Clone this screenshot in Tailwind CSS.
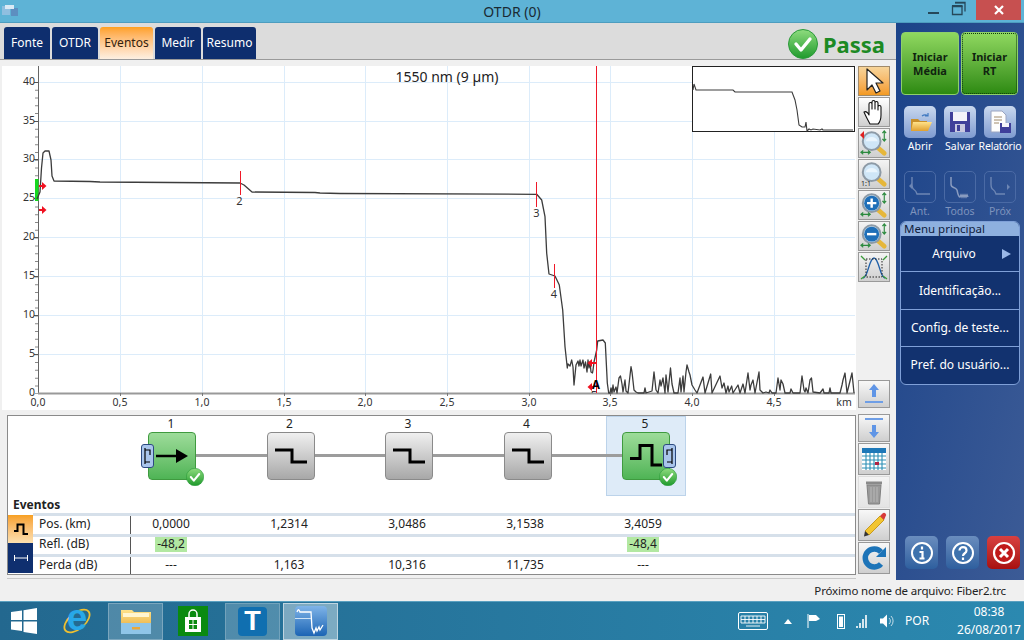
<!DOCTYPE html>
<html>
  <head>
    <title>OTDR (0)</title>
    <script src="https://cdn.jsdelivr.net/npm/@tailwindcss/browser@4"></script>
  </head>
  <body class="w-[1024px] h-[640px] overflow-hidden bg-[#f0f0f0] font-['Noto_Sans',sans-serif] text-[12px] text-[#222]">
    <!-- shared icon parts -->
    <svg class="absolute w-0 h-0">
      <defs>
        <linearGradient id="gcheck" x1="0" y1="0" x2="0" y2="1"><stop offset="0" stop-color="#8fdc7f"/><stop offset="1" stop-color="#1f9a2c"/></linearGradient>
        <linearGradient id="gfold" x1="0" y1="0" x2="0" y2="1"><stop offset="0" stop-color="#ffe28a"/><stop offset="1" stop-color="#e0a030"/></linearGradient>
        <linearGradient id="gapp" x1="0" y1="0" x2="0" y2="1"><stop offset="0" stop-color="#7fb4e8"/><stop offset="1" stop-color="#1c64b4"/></linearGradient>
        <clipPath id="c5"><rect x="585" y="380" width="20" height="13"/></clipPath>
        <symbol id="check" viewBox="0 0 30 30">
          <circle cx="15" cy="15" r="14.5" fill="url(#gcheck)" stroke="#2a9a3a"/>
          <path d="M8 15l5 6 9-11" fill="none" stroke="#fff" stroke-width="3.4" stroke-linecap="round" stroke-linejoin="round"/>
        </symbol>
        <symbol id="mag" viewBox="0 0 32 30">
          <path d="M19 19l8 7" stroke="#e6b73a" stroke-width="5" stroke-linecap="round"/>
          <circle cx="13.5" cy="13" r="9.5" fill="#cfe6f7" stroke="#8d9aa6" stroke-width="2.2"/>
          <path d="M7 13a7 7 0 0 1 13 0z" fill="#eaf5fd"/>
        </symbol>
        <symbol id="arrowsxy" viewBox="0 0 32 30">
          <path d="M27 2v11M25 4.500l2-2.500 2 2.500M25 10.500l2 2.500 2-2.500M2 25h10M4.500 23l-2.500 2 2.500 2M9.500 23l2.500 2-2.500 2" fill="none" stroke="#2b8a3e" stroke-width="1.200"/>
        </symbol>
        <symbol id="nodestep" viewBox="0 0 46 46">
          <path d="M7 17h17v12h15" fill="none" stroke="#000" stroke-width="3"/>
        </symbol>
      </defs>
    </svg>

    <div class="flex flex-col w-[1024px] h-[640px]">
      <!-- title bar -->
      <div class="flex items-center h-[23px] bg-[#5eb3d6] border-b border-[#4d9dbf] relative">
        <svg class="ml-[2px] w-[17px] h-[12px]" viewBox="0 0 17 12"><rect x="0" y="1" width="8" height="9" fill="#8fbfe0"/><rect x="9" y="3" width="7" height="8" fill="#5d8fc0"/><rect x="3" y="0" width="9" height="4" fill="#dbeaf5"/></svg>
        <div class="flex-1 text-center text-[14px] text-[#1a2a33] ml-[-19px]">OTDR (0)</div>
        <div class="absolute right-[3px] top-0 flex items-start">
          <svg class="w-[24px] h-[20px]" viewBox="0 0 24 20"><rect x="4" y="12" width="11" height="2" fill="#26485a"/></svg>
          <svg class="w-[24px] h-[20px] mr-[4px]" viewBox="0 0 24 20"><path d="M7 2.500h10v9M4.500 6.500h9.500v8h-9.500z" fill="none" stroke="#26485a" stroke-width="1.300"/><rect x="4" y="5" width="10.500" height="2" fill="#26485a"/><rect x="7" y="2" width="10" height="1.500" fill="#26485a"/></svg>
          <div class="flex items-center justify-center w-[45px] h-[20px] bg-[#c75050]">
            <svg class="w-[10px] h-[10px]" viewBox="0 0 10 10"><path d="M1 1l8 8M9 1l-8 8" stroke="#fff" stroke-width="2.200"/></svg>
          </div>
        </div>
      </div>

      <div class="flex h-[557px]">
        <!-- left column -->
        <div class="flex flex-col w-[896px]">
          <!-- tabs -->
          <div class="flex items-end justify-between h-[37px] pl-[4px] pr-[11px] bg-[#dcdcdc] border-b border-[#9a9a9a]">
            <div class="flex gap-[2px] h-[32px]">
              <div class="flex items-center justify-center w-[46px] rounded-t-[3px] bg-[#0e2e6e] text-white">Fonte</div>
              <div class="flex items-center justify-center w-[46px] rounded-t-[3px] bg-[#0e2e6e] text-white">OTDR</div>
              <div class="flex items-center justify-center w-[53px] rounded-t-[3px] bg-linear-to-b from-[#ffa01a] to-[#fdf0e2] text-[#33220f]">Eventos</div>
              <div class="flex items-center justify-center w-[46px] rounded-t-[3px] bg-[#0e2e6e] text-white">Medir</div>
              <div class="flex items-center justify-center w-[53px] rounded-t-[3px] bg-[#0e2e6e] text-white">Resumo</div>
            </div>
            <div class="flex items-center gap-[5px] self-center mt-[5px]">
              <svg class="w-[30px] h-[30px]"><use href="#check"/></svg>
              <span class="text-[22px] font-bold leading-none text-[#1c8a24]">Passa</span>
            </div>
          </div>

          <div class="flex h-[520px]">
            <div class="flex flex-col w-[856px]">
              <!-- trace chart -->
              <svg class="block w-[856px] h-[350px]" viewBox="0 60 856 350" font-size="10.500" fill="#333">
                <rect x="2" y="66" width="854" height="344" fill="#fff"/>
                <g stroke="#dcecfa" stroke-width="1">
                  <path d="M120.500 66V393M202.500 66V393M284.500 66V393M365.500 66V393M447.500 66V393M529.500 66V393M610.500 66V393M692.500 66V393M774.500 66V393"/>
                  <path d="M38 82.500H855M38 121.500H855M38 159.500H855M38 198.500H855M38 237.500H855M38 276.500H855M38 315.500H855M38 354.500H855"/>
                </g>
                <!-- axes -->
                <path d="M38.500 66V394" stroke="#666" stroke-width="1"/>
                <path d="M35 82v312" stroke="#888" stroke-width="3" stroke-dasharray="1 6.780" fill="none" transform="translate(1.500 0)"/>
                <path d="M34 82.500h4M34 121.500h4M34 159.500h4M34 198.500h4M34 237.500h4M34 276.500h4M34 315.500h4M34 354.500h4" stroke="#555"/>
                <path d="M38 393.500H855" stroke="#999" stroke-width="2"/>
                <path d="M120.500 393v3M202.500 393v3M284.500 393v3M365.500 393v3M447.500 393v3M529.500 393v3M610.500 393v3M692.500 393v3M774.500 393v3" stroke="#777"/>
                <g text-anchor="end">
                  <text x="35" y="85">40</text><text x="35" y="124">35</text><text x="35" y="162">30</text><text x="35" y="201">25</text><text x="35" y="240">20</text><text x="35" y="279">15</text><text x="35" y="318">10</text><text x="35" y="357">5</text><text x="35" y="396">0</text>
                </g>
                <g text-anchor="middle">
                  <text x="38" y="406">0,0</text><text x="120" y="406">0,5</text><text x="202" y="406">1,0</text><text x="284" y="406">1,5</text><text x="365" y="406">2,0</text><text x="447" y="406">2,5</text><text x="529" y="406">3,0</text><text x="610" y="406">3,5</text><text x="692" y="406">4,0</text><text x="774" y="406">4,5</text><text x="844" y="406">km</text>
                </g>
                <text x="447" y="82" text-anchor="middle" font-size="14" fill="#222">1550 nm (9 µm)</text>
                <!-- launch marker -->
                <rect x="35" y="179" width="3.500" height="22" fill="#17d81f"/>
                <!-- trace -->
                <path fill="none" stroke="#3c3c3c" stroke-width="1.300" stroke-linejoin="round"
                  d="M37 199 40 192 41.500 168 43 153 45 151 49 151 51 160 52 176 54 181 90 181.500 100 182 170 182.500 240 183 244 185 252 192 315 192.500 320 193 340 193.500 536.700 194.300 541.700 200 545 216.700 546.700 253.300 549 274 555 276 559.300 285 562.700 310 565 346.700 567.300 368 568 364 570 366 571.700 360 573 367 574 385 576 365 578 361 579 366 580 360 581 366 583 360 584 368 585.500 362 587 372 588 360 589 368 590 362 591 372 592.500 373 593 370 594 362 596.700 350 597.700 341 603 340 605.300 343 607.300 383 608.700 393 610 393 611 388 612 393 613 385 614 392 616 387 617 393 619 378 620.500 376 622 384 623 392 625 380 626 391 628 393 631 366.700 632 372 634 390 636 392 638 393 644 393 645 388 646 393 652 391 654 372 656 390 658 393 660 380 661 386 663 378 665 393 666 375 668 392 670.500 368 672 384 674 393 678 393 680 378 681 392 683 376 684 392 686 372 687 365 689 372 690 375 692 385 695 390 697 393 703 377 705 393 710.700 374 712 393 720 376 722 388 724 383 726 393 728 386 729 392 731.700 386 733 393 738 385 740 393 743 384 745 393 748 373 750 390 751 385 753 380 755 393 759 372 760 390 763 393 766 392 769 393 770 390 772 393 776 393 778 378 780 390 781 380 783 384 785 393 790 393 791 389 793 393 800 393 802 376 804 390 805 392 806 388 808 393 810 380 811.500 378 813 392 820 393 823 389 824 393 829 393 830 388 831 393 840 393 842 385 843 380 845 373 847 393 850 381 852 373 854 393"/>
                <!-- event ticks -->
                <path d="M240.500 171V195M536.500 182V207M554.500 264V288" stroke="#f01828" stroke-width="1"/>
                <text x="239.500" y="205" text-anchor="middle" font-size="11">2</text>
                <text x="536.500" y="217" text-anchor="middle" font-size="11">3</text>
                <text x="554" y="298" text-anchor="middle" font-size="11">4</text>
                <path d="M596.500 66V393" stroke="#f01828" stroke-width="1"/>
                <path d="M39 185h3v-3l4.500 4-4.500 4v-3h-3zM39 209h3v-3l4.500 4-4.500 4v-3h-3z" fill="#f01020"/>
                <path d="M596 362h-4v-3l-4.500 4 4.500 4v-3h4zM593 386h-1v-3l-4.500 4 4.500 4v-3h1z" fill="#f01020"/>
                <text x="596" y="389" text-anchor="middle" font-size="11.500" font-weight="700" fill="#000">A</text>
                <text x="594" y="399" text-anchor="middle" font-size="11" clip-path="url(#c5)">5</text>
                <!-- overview -->
                <rect x="692.500" y="66.500" width="162" height="65" fill="#fff" stroke="#222"/>
                <path fill="none" stroke="#3c3c3c" stroke-width="1.100" d="M693 90 694 84 696 90 733 90 735 92 792 92 795 100 797 110 799 125 802 127 805 127 806 122 807 131 809 129 811 130 813 129 820 130 822 129 823 130 835 130 853 130"/>
              </svg>

              <!-- events panel -->
              <div class="flex flex-col relative ml-[7px] mt-[5px] w-[849px] h-[160px] bg-white border border-[#8a8a8a]">
                <!-- selected node highlight -->
                <div class="absolute left-[598px] top-0 w-[80px] h-[80px] bg-[#deebf8] border border-[#bcd3ea]"></div>
                <div class="relative flex items-start h-[81px] pl-[140px]">
                  <div class="flex flex-col w-[48px] relative">
                    <div class="h-[16px] pr-[2px] text-center leading-[16px]">1</div>
                    <div class="flex items-center justify-center h-[48px] rounded-[4px] border border-[#3f9a3f] bg-linear-to-b from-[#9ddc9a] to-[#4eb455]">
                      <svg class="w-[46px] h-[46px]" viewBox="0 0 46 46"><path d="M7 23h24" stroke="#000" stroke-width="2.500"/><path d="M27 16l12 7-12 7z" fill="#000"/></svg>
                    </div>
                    <div class="absolute left-[-7px] top-[28px] w-[13px] h-[24px] rounded-[3px] bg-[#a9c5ec] border border-[#2c4a80]">
                      <svg class="w-[11px] h-[22px]" viewBox="0 0 11 22"><path d="M3 5h5v5M8 17H3v-5M3 3v16" fill="none" stroke="#000" stroke-width="1.200"/></svg>
                    </div>
                    <svg class="absolute left-[38px] top-[52px] w-[18px] h-[18px]"><use href="#check"/></svg>
                  </div>
                  <div class="w-[70.500px] h-[3px] mt-[38px] bg-[#9c9c9c]"></div>
                  <div class="flex flex-col w-[48px]">
                    <div class="h-[16px] pr-[2px] text-center leading-[16px]">2</div>
                    <div class="h-[48px] rounded-[4px] border border-[#8a8a8a] bg-linear-to-b from-[#f0f0f0] to-[#a8a8a8]"><svg class="w-[46px] h-[46px]"><use href="#nodestep"/></svg></div>
                  </div>
                  <div class="w-[70.500px] h-[3px] mt-[38px] bg-[#9c9c9c]"></div>
                  <div class="flex flex-col w-[48px]">
                    <div class="h-[16px] pr-[2px] text-center leading-[16px]">3</div>
                    <div class="h-[48px] rounded-[4px] border border-[#8a8a8a] bg-linear-to-b from-[#f0f0f0] to-[#a8a8a8]"><svg class="w-[46px] h-[46px]"><use href="#nodestep"/></svg></div>
                  </div>
                  <div class="w-[70.500px] h-[3px] mt-[38px] bg-[#9c9c9c]"></div>
                  <div class="flex flex-col w-[48px]">
                    <div class="h-[16px] pr-[2px] text-center leading-[16px]">4</div>
                    <div class="h-[48px] rounded-[4px] border border-[#8a8a8a] bg-linear-to-b from-[#f0f0f0] to-[#a8a8a8]"><svg class="w-[46px] h-[46px]"><use href="#nodestep"/></svg></div>
                  </div>
                  <div class="w-[70.500px] h-[3px] mt-[38px] bg-[#9c9c9c]"></div>
                  <div class="flex flex-col w-[48px] relative">
                    <div class="h-[16px] pr-[2px] text-center leading-[16px]">5</div>
                    <div class="h-[48px] rounded-[4px] border border-[#3f9a3f] bg-linear-to-b from-[#9ddc9a] to-[#4eb455]">
                      <svg class="w-[46px] h-[46px]" viewBox="0 0 46 46"><path d="M7 25.500h10V12.500h12v19.500h10" fill="none" stroke="#000" stroke-width="3"/></svg>
                    </div>
                    <div class="absolute left-[41px] top-[28px] w-[13px] h-[24px] rounded-[3px] bg-[#a9c5ec] border border-[#2c4a80]">
                      <svg class="w-[11px] h-[22px]" viewBox="0 0 11 22"><path d="M8 5H3v5M3 17h5v-5M8 3v16" fill="none" stroke="#000" stroke-width="1.200"/></svg>
                    </div>
                    <svg class="absolute left-[37px] top-[52px] w-[18px] h-[18px]"><use href="#check"/></svg>
                  </div>
                </div>
                <div class="h-[16px] pl-[5px] font-bold leading-[16px] text-[#222]">Eventos</div>
                <!-- table -->
                <div class="flex h-[61px]">
                  <div class="flex flex-col w-[25px] shrink-0 pt-[2px]">
                    <div class="flex items-center justify-center h-[28px] bg-linear-to-b from-[#f7a01e] to-[#fbe0b0]">
                      <svg class="w-[16px] h-[14px]" viewBox="0 0 16 14"><path d="M1 9h3.500V2.500h6V12H15" fill="none" stroke="#000" stroke-width="2"/></svg>
                    </div>
                    <div class="flex items-center justify-center h-[30px] bg-[#0f2f6f]">
                      <svg class="w-[16px] h-[10px]" viewBox="0 0 16 10"><path d="M1 5h14M1.500 2v6M14.500 2v6" stroke="#fff" stroke-width="1"/></svg>
                    </div>
                  </div>
                  <div class="flex flex-col flex-1">
                    <div class="flex items-start h-[21px] border-t-[3px] border-[#d6e0ea] leading-[16px]">
                      <div class="w-[98px] pl-[6px] h-full border-r border-[#555]">Pos. (km)</div>
                      <div class="w-[80px] mr-[19px] text-center">0,0000</div>
                      <div class="w-[118px] text-center">1,2314</div>
                      <div class="w-[118px] text-center">3,0486</div>
                      <div class="w-[118px] text-center">3,1538</div>
                      <div class="w-[118px] text-center">3,4059</div>
                    </div>
                    <div class="flex items-start h-[20px] border-t-[3px] border-[#d6e0ea] leading-[14px]">
                      <div class="w-[98px] pl-[6px] h-full border-r border-[#555]">Refl. (dB)</div>
                      <div class="flex justify-center w-[80px] mr-[19px]"><span class="w-[32px] h-[15px] leading-[14px] text-center bg-[#b2e8a2]">-48,2</span></div>
                      <div class="w-[118px]"></div>
                      <div class="w-[118px]"></div>
                      <div class="w-[118px]"></div>
                      <div class="flex justify-center w-[118px]"><span class="w-[32px] h-[15px] leading-[14px] text-center bg-[#b2e8a2]">-48,4</span></div>
                    </div>
                    <div class="flex items-start h-[20px] border-t-[3px] border-[#d6e0ea] leading-[16px]">
                      <div class="w-[98px] pl-[6px] h-full border-r border-[#555]">Perda (dB)</div>
                      <div class="w-[80px] mr-[19px] text-center">---</div>
                      <div class="w-[118px] text-center">1,163</div>
                      <div class="w-[118px] text-center">10,316</div>
                      <div class="w-[118px] text-center">11,735</div>
                      <div class="w-[118px] text-center">---</div>
                    </div>
                  </div>
                </div>
              </div>
              <div class="ml-[7px] mt-[3px] w-[849px] h-[1px] bg-[#c8c8c8]"></div>
            </div>

            <!-- tool strip -->
            <div class="flex flex-col w-[40px] pl-[2px] pt-[6px]">
              <div class="w-[32px] h-[30px] border border-[#a08a6a] bg-linear-to-b from-[#f7d59a] to-[#f39a1f]">
                <svg class="w-[30px] h-[28px]" viewBox="0 0 30 28"><path d="M8 2v21l5-5 4 8 4-2-4-8h7z" fill="#fff" stroke="#222" stroke-width="1.200" stroke-linejoin="round"/></svg>
              </div>
              <div class="w-[32px] h-[30px] mt-[1px] border border-[#999] bg-linear-to-b from-white to-[#cfcfcf]">
                <svg class="w-[30px] h-[28px]" viewBox="0 0 30 28"><path d="M5 14c2-1 4 1 5 3V6c0-2 3-2 3 0v5-7c0-2 3-2 3 0v7-6c0-2 3-2 3 0v7-3c0-2 3-2 3 0v8c0 5-2 8-3 9H11c-2-4-4-7-6-12z" fill="#fff" stroke="#111" stroke-width="1.100" stroke-linejoin="round"/></svg>
              </div>
              <div class="relative w-[32px] h-[30px] mt-[1px] border border-[#999] bg-linear-to-b from-[#f4f4f4] to-[#cfcfcf]">
                <svg class="absolute inset-0 w-[30px] h-[28px]"><use href="#mag"/></svg>
                <svg class="absolute inset-0 w-[30px] h-[28px]"><use href="#arrowsxy"/></svg>
                <svg class="absolute inset-0 w-[30px] h-[28px]" viewBox="0 0 30 28"><path d="M1 6l4-4v8z" fill="#e02020"/></svg>
              </div>
              <div class="relative w-[32px] h-[30px] mt-[1px] border border-[#999] bg-linear-to-b from-[#f4f4f4] to-[#cfcfcf]">
                <svg class="absolute inset-0 w-[30px] h-[28px]"><use href="#mag"/></svg>
                <span class="absolute left-[2px] bottom-[1px] text-[7px] leading-none">1:1</span>
              </div>
              <div class="relative w-[32px] h-[30px] mt-[1px] border border-[#999] bg-linear-to-b from-[#f4f4f4] to-[#cfcfcf]">
                <svg class="absolute inset-0 w-[30px] h-[28px]"><use href="#mag"/></svg>
                <svg class="absolute inset-0 w-[30px] h-[28px]"><use href="#arrowsxy"/></svg>
                <svg class="absolute inset-0 w-[30px] h-[28px]" viewBox="0 0 32 30"><circle cx="13.500" cy="13" r="8" fill="#1f6fb8"/><path d="M8.500 13h10M13.500 8v10" stroke="#fff" stroke-width="2.600"/></svg>
              </div>
              <div class="relative w-[32px] h-[30px] mt-[1px] border border-[#999] bg-linear-to-b from-[#f4f4f4] to-[#cfcfcf]">
                <svg class="absolute inset-0 w-[30px] h-[28px]"><use href="#mag"/></svg>
                <svg class="absolute inset-0 w-[30px] h-[28px]"><use href="#arrowsxy"/></svg>
                <svg class="absolute inset-0 w-[30px] h-[28px]" viewBox="0 0 32 30"><circle cx="13.500" cy="13" r="8" fill="#1f6fb8"/><path d="M8.500 13h10" stroke="#fff" stroke-width="2.600"/></svg>
              </div>
              <div class="w-[32px] h-[30px] mt-[1px] border border-[#999] bg-linear-to-b from-[#f4f4f4] to-[#cfcfcf]">
                <svg class="w-[30px] h-[28px]" viewBox="0 0 30 28"><path d="M4 25C9 25 10 5 15 5s6 20 11 20" fill="none" stroke="#1f5fa8" stroke-width="1.300"/><path d="M7 6h16v18H7z" fill="none" stroke="#222" stroke-dasharray="1.500 1.500"/><path d="M2 3l4 4M28 3l-4 4M2 26l4-3M28 26l-4-3" stroke="#3a9a3a" stroke-width="1.300"/></svg>
              </div>

              <div class="w-[32px] h-[28px] mt-[98px] border border-[#999] bg-linear-to-b from-[#f8f8f8] to-[#cfcfcf]">
                <svg class="w-[30px] h-[26px]" viewBox="0 0 30 26"><path d="M15 3l5 6h-3v7h-4V9h-3z" fill="#5f95e6"/><rect x="6" y="20" width="18" height="2" fill="#6e9ee6"/></svg>
              </div>
              <div class="w-[32px] h-[28px] mt-[6px] border border-[#999] bg-linear-to-b from-[#f8f8f8] to-[#cfcfcf]">
                <svg class="w-[30px] h-[26px]" viewBox="0 0 30 26"><rect x="6" y="3" width="18" height="2" fill="#6e9ee6"/><path d="M15 23l5-6h-3v-7h-4v7h-3z" fill="#5f95e6"/></svg>
              </div>
              <div class="w-[32px] h-[32px] mt-[1px] border border-[#999] bg-linear-to-b from-[#f8f8f8] to-[#cfcfcf]">
                <svg class="w-[30px] h-[30px]" viewBox="0 0 30 30"><rect x="3" y="4" width="24" height="22" fill="#fff"/><rect x="3" y="4" width="24" height="5" fill="#1d78b8"/><path d="M3 12h24M3 16h24M3 20h24M3 24h24M7 9v17M11 9v17M15 9v17M19 9v17M23 9v17" stroke="#2d8fb5" stroke-width="1.100"/><rect x="16" y="18" width="4" height="3" fill="#b02040"/></svg>
              </div>
              <div class="w-[32px] h-[32px] mt-[1px] border border-[#ddd] bg-linear-to-b from-[#f4f4f4] to-[#e4e4e4]">
                <svg class="w-[30px] h-[30px]" viewBox="0 0 30 30"><path d="M8 8h14l-1.500 19h-11z" fill="#9a9a9a" stroke="#808080"/><rect x="7" y="4.500" width="16" height="3" fill="#8a8a8a"/><path d="M12 10v15M15 10v15M18 10v15" stroke="#b8b8b8"/></svg>
              </div>
              <div class="w-[32px] h-[32px] mt-[1px] border border-[#999] bg-linear-to-b from-[#f8f8f8] to-[#cfcfcf]">
                <svg class="w-[30px] h-[30px]" viewBox="0 0 30 30"><path d="M6 21L21 6l4 4-15 15z" fill="#f2c531" stroke="#c89a20"/><path d="M21 6l2.500-2.500a2 2 0 0 1 3 3L25 10z" fill="#d83a3a"/><path d="M6 21l4 4-5 1.500z" fill="#333"/></svg>
              </div>
              <div class="w-[32px] h-[32px] mt-[1px] border border-[#999] bg-linear-to-b from-[#f8f8f8] to-[#cfcfcf]">
                <svg class="w-[30px] h-[30px]" viewBox="0 0 30 30"><path d="M22 21a9 9 0 1 1 0-12" fill="none" stroke="#1d74b8" stroke-width="5.500"/><path d="M27 4v10H17z" fill="#1d74b8"/></svg>
              </div>
            </div>
          </div>
        </div>

        <!-- right panel -->
        <div class="flex flex-col w-[128px] bg-linear-to-br from-[#1b4389] to-[#3c5b96] px-[4px] pt-[9px]">
          <div class="flex gap-[2px] pl-[1px]">
            <div class="flex items-center justify-center w-[58px] h-[63px] rounded-[4px] border border-[#8fd06a] bg-linear-to-b from-[#8fd85f] to-[#2c8a10] text-center text-[11px] font-bold leading-[14px] text-[#102410]">Iniciar<br>Média</div>
            <div class="flex items-center justify-center w-[57px] h-[63px] rounded-[4px] border border-[#8fd06a] outline outline-dotted outline-[#0c3a0c] -outline-offset-2 bg-linear-to-b from-[#8fd85f] to-[#2c8a10] text-center text-[11px] font-bold leading-[14px] text-[#102410]">Iniciar<br>RT</div>
          </div>

          <div class="flex justify-between mt-[11px] w-[120px] text-white text-[10.500px]">
            <div class="flex flex-col items-center w-[40px]">
              <div class="flex items-center justify-center w-[32px] h-[32px] rounded-[5px] bg-linear-to-b from-[#c9d8ee] to-[#7f9bd0]">
                <svg class="w-[26px] h-[26px]" viewBox="0 0 26 26"><path d="M4 10h7l2 2h7v10H4z" fill="#c8902a"/><path d="M6 13h19l-4 9H4z" fill="url(#gfold)"/><path d="M15 7a5 5 0 0 1 6 0M21 4v3h-3" fill="none" stroke="#3f78c0" stroke-width="1.200"/></svg>
              </div>
              <div class="leading-[16px]">Abrir</div>
            </div>
            <div class="flex flex-col items-center w-[40px]">
              <div class="flex items-center justify-center w-[32px] h-[32px] rounded-[5px] bg-linear-to-b from-[#c9d8ee] to-[#7f9bd0]">
                <svg class="w-[26px] h-[26px]" viewBox="0 0 26 26"><path d="M3 3h20v20H3z" fill="#3f3f9a"/><rect x="6" y="3" width="14" height="9" fill="#f4f4fa"/><rect x="8" y="15" width="10" height="8" fill="#c8c8e0"/><rect x="10" y="16" width="3" height="6" fill="#3f3f9a"/></svg>
              </div>
              <div class="leading-[16px]">Salvar</div>
            </div>
            <div class="flex flex-col items-center w-[40px]">
              <div class="flex items-center justify-center w-[32px] h-[32px] rounded-[5px] bg-linear-to-b from-[#c9d8ee] to-[#7f9bd0]">
                <svg class="w-[26px] h-[26px]" viewBox="0 0 26 26"><path d="M4 2h11l4 4v17H4z" fill="#fdfdfd" stroke="#9aa4c0"/><path d="M7 8h8M7 11h8M7 14h5" stroke="#a08a6a"/><rect x="13" y="14" width="11" height="10" fill="#3f3f9a"/><rect x="15" y="14" width="7" height="4" fill="#f4f4fa"/></svg>
              </div>
              <div class="leading-[16px] whitespace-nowrap tracking-[-0.2px]">Relatório</div>
            </div>
          </div>

          <div class="flex justify-between mt-[17px] w-[120px] text-[#7e93bd] text-[10.500px]">
            <div class="flex flex-col items-center w-[40px]">
              <div class="flex items-center justify-center w-[32px] h-[32px] rounded-[5px] border border-[#4a6aa5]">
                <svg class="w-[26px] h-[26px]" viewBox="0 0 26 26"><path d="M6 3v7c0 8 3 3 5 10h13" transform="translate(-1 0)" fill="none" stroke="#6d86b4" stroke-width="1.400"/><path d="M2 12l3-3v6z" fill="#6d86b4"/></svg>
              </div>
              <div class="leading-[16px]">Ant.</div>
            </div>
            <div class="flex flex-col items-center w-[40px]">
              <div class="flex items-center justify-center w-[32px] h-[32px] rounded-[5px] border border-[#4a6aa5]">
                <svg class="w-[26px] h-[26px]" viewBox="0 0 26 26"><path d="M4 3v7c0 5 4 2 6 6 1 5 2 7 3 7l1-2 1 2 1-2 1 2 1-2 1 2 1-2 1 2" fill="none" stroke="#8a9cc0" stroke-width="1.500"/></svg>
              </div>
              <div class="leading-[16px]">Todos</div>
            </div>
            <div class="flex flex-col items-center w-[40px]">
              <div class="flex items-center justify-center w-[32px] h-[32px] rounded-[5px] border border-[#4a6aa5]">
                <svg class="w-[26px] h-[26px]" viewBox="0 0 26 26"><path d="M4 3v7c0 8 3 3 5 10h9" fill="none" stroke="#6d86b4" stroke-width="1.400"/><path d="M23 13l-3-3v6z" fill="#6d86b4"/></svg>
              </div>
              <div class="leading-[16px]">Próx</div>
            </div>
          </div>

          <!-- main menu -->
          <div class="mt-[2px] w-[120px] h-[164px] rounded-[6px] overflow-hidden border border-[#7fa0d8] bg-[#12326f] text-white">
            <div class="h-[14px] px-[3px] bg-[#8eb0df] text-[#10203c] text-[11.500px] leading-[13px]">Menu principal</div>
            <div class="relative flex items-center justify-center h-[36px] border-b border-[#7fa0d8]">
              <span class="pr-[12px]">Arquivo</span>
              <svg class="absolute right-[8px] w-[10px] h-[10px]" viewBox="0 0 10 10"><path d="M1 0l9 5-9 5z" fill="#9ab8e8"/></svg>
            </div>
            <div class="flex items-center justify-center h-[38px] border-b border-[#7fa0d8] whitespace-nowrap">Identificação...</div>
            <div class="flex items-center justify-center h-[37px] border-b border-[#7fa0d8] whitespace-nowrap">Config. de teste...</div>
            <div class="flex items-center justify-center h-[36px] whitespace-nowrap">Pref. do usuário...</div>
          </div>

          <div class="flex justify-between mt-auto mb-[11px] pl-[5px]">
            <div class="flex items-center justify-center w-[33px] h-[33px] rounded-[5px] bg-linear-to-b from-[#6a8dbe] to-[#2e5f9e]">
              <svg class="w-[24px] h-[24px]" viewBox="0 0 24 24"><circle cx="12" cy="12" r="10" fill="#3e72ad" stroke="#fff" stroke-width="2"/><path d="M12 5.500v3M9.500 11h3v6.500M9.500 17.500h5" fill="none" stroke="#fff" stroke-width="2.200"/></svg>
            </div>
            <div class="flex items-center justify-center w-[33px] h-[33px] rounded-[5px] bg-linear-to-b from-[#6a8dbe] to-[#2e5f9e]">
              <svg class="w-[24px] h-[24px]" viewBox="0 0 24 24"><circle cx="12" cy="12" r="10" fill="#3e72ad" stroke="#fff" stroke-width="2"/><path d="M8.500 9.500c0-4.500 7-4.500 7 0 0 3-3.500 2.500-3.500 5.500M12 16.500v2.500" fill="none" stroke="#fff" stroke-width="2.200"/></svg>
            </div>
            <div class="flex items-center justify-center w-[33px] h-[33px] rounded-[5px] bg-linear-to-b from-[#d84040] to-[#a80f0f]">
              <svg class="w-[24px] h-[24px]" viewBox="0 0 24 24"><circle cx="12" cy="12" r="10" fill="#c01a1a" stroke="#fff" stroke-width="2.200"/><path d="M8 8l8 8M16 8l-8 8" stroke="#fff" stroke-width="3"/></svg>
            </div>
          </div>
        </div>
      </div>

      <!-- status bar -->
      <div class="flex items-center justify-end h-[21px] pr-[18px] bg-[#f0f0f0] text-[11.500px] tracking-[-0.15px] text-[#222]">Próximo nome de arquivo: Fiber2.trc</div>

      <!-- taskbar -->
      <div class="flex items-center h-[39px] bg-linear-to-r from-[#23688f] to-[#2b89b0] border-t border-[#5aa0c0] text-white relative">
        <svg class="ml-[11px] w-[26px] h-[26px]" viewBox="0 0 26 26"><path d="M0 4l11-1.500V12H0zM12.500 2.300L26 0v12H12.500zM0 13.500h11V23L0 21.500zM12.500 13.500H26V26l-13.500-2z" fill="#fff"/></svg>
        <div class="relative flex items-center justify-center ml-[25px] w-[30px] h-[30px]">
          <svg class="absolute inset-0 w-[30px] h-[30px]" viewBox="0 0 30 30"><ellipse cx="15" cy="15" rx="15" ry="8" transform="rotate(-40 15 15)" fill="none" stroke="#f0c030" stroke-width="1.800"/></svg>
          <span class="relative font-['Liberation_Sans',sans-serif] text-[37px] font-bold leading-none mt-[-8px] text-[#28a8e8]">e</span>
        </div>
        <div class="flex items-center justify-center ml-[16px] w-[55px] h-[37px] bg-white/20 border border-white/25">
          <svg class="w-[32px] h-[30px]" viewBox="0 0 32 30"><path d="M1 4h11l2 2h17v22H1z" fill="url(#gfold)"/><rect x="3" y="7" width="26" height="4" fill="#fff5d0"/><rect x="1" y="17" width="30" height="11" fill="#8fc5e8"/><rect x="12" y="21" width="8" height="2.500" fill="#e8a83a"/></svg>
        </div>
        <div class="flex items-center justify-center ml-[15px] w-[30px] h-[30px] bg-[#0a8a10]">
          <svg class="w-[22px] h-[24px]" viewBox="0 0 22 24"><path d="M3 8h16v15H3z" fill="#fff"/><path d="M7 8V5a4 4 0 0 1 8 0v3" fill="none" stroke="#fff" stroke-width="1.500"/><path d="M7 11h3.500v4H7zM11.500 11H15v4h-3.500zM7 16h3.500v4H7zM11.500 16H15v4h-3.500z" fill="#0a8a10"/></svg>
        </div>
        <div class="flex items-center justify-center ml-[17px] w-[55px] h-[37px] bg-white/20 border border-white/20">
          <div class="flex items-center justify-center w-[29px] h-[29px] rounded-[4px] bg-[#106fb0] text-[27px] font-bold leading-none text-white font-['Liberation_Sans',sans-serif]">T</div>
        </div>
        <div class="flex items-center justify-center ml-[3px] w-[55px] h-[37px] bg-white/40 border border-white/50">
          <svg class="w-[32px] h-[30px]" viewBox="0 0 32 30"><rect width="32" height="30" rx="4" fill="url(#gapp)"/><path d="M2 6c1-3 2-3 3 0h11l1 16 2 5 2-5 1 3 2-4 1 3 3-5" fill="none" stroke="#fff" stroke-width="1.300"/><rect y="12" width="16" height="1" fill="#cfe3f5"/></svg>
        </div>
        <div class="flex items-center ml-auto pr-[5px]">
          <svg class="w-[30px] h-[18px] mr-[16px]" viewBox="0 0 30 18"><rect x="0.500" y="0.500" width="29" height="17" rx="1.500" fill="none" stroke="#fff"/><path d="M3 4h24M3 7.500h24M3 11h24M3 4v7M7 4v7M11 4v7M15 4v7M19 4v7M23 4v7M27 4v7M8 14h14" stroke="#fff" stroke-width="0.900"/></svg>
          <svg class="w-[8px] h-[5px] mr-[15px]" viewBox="0 0 8 5"><path d="M0 5l4-5 4 5z" fill="#fff"/></svg>
          <svg class="w-[14px] h-[14px] mr-[16px]" viewBox="0 0 14 14"><path d="M1 0v14" stroke="#fff"/><path d="M2 1h7l4 4-4 2H2z" fill="#fff"/></svg>
          <svg class="w-[8px] h-[16px] mr-[11px]" viewBox="0 0 8 16"><rect x="0.500" y="1.500" width="7" height="14" fill="none" stroke="#fff"/><rect x="2" y="3.500" width="4" height="10.500" fill="#fff"/></svg>
          <svg class="w-[12px] h-[14px] mr-[11px]" viewBox="0 0 12 14"><path d="M0 14V12h2v2zM3 14V9h2v5zM6 14V5h2v9zM9 14V1h2v13z" fill="#fff" fill-opacity="0.800"/></svg>
          <svg class="w-[16px] h-[16px] mr-[10px]" viewBox="0 0 16 16"><path d="M1 5.500h3l4-4v13l-4-4H1z" fill="#fff"/><path d="M10 5a4 4 0 0 1 0 6M12 3a7 7 0 0 1 0 10" fill="none" stroke="#fff" stroke-opacity="0.700"/></svg>
          <span class="w-[24px] text-center text-[12px] mr-[30px]">POR</span>
          <div class="flex flex-col items-center w-[60px] text-[12px] leading-[18px]">
            <span>08:38</span>
            <span>26/08/2017</span>
          </div>
        </div>
      </div>
    </div>
  </body>
</html>
